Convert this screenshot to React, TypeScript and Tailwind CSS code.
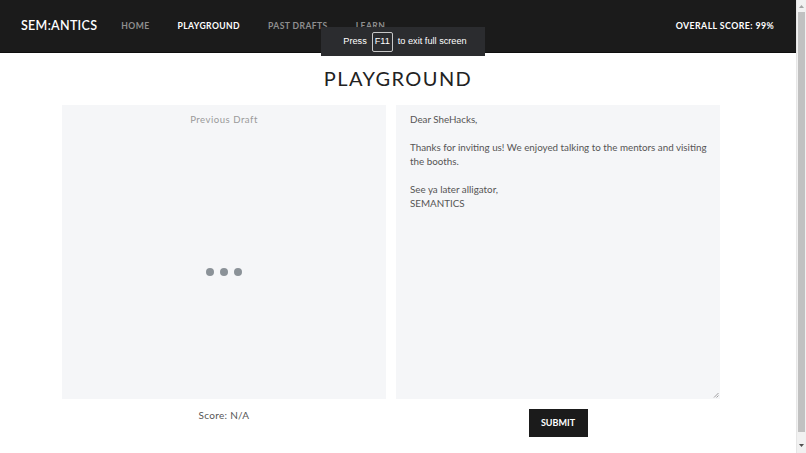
import React from "react";

export default function App() {
  return (
    <div className="w-[806px] h-[453px] overflow-hidden flex bg-white relative" style={{ fontFamily: "Lato, 'Noto Sans', sans-serif" }}>
      <div className="flex-1 flex flex-col">
        <nav className="h-[53px] bg-[#1b1b1b] flex items-center pl-[21px] pr-[22px] border-b border-[#0e0e0e]">
          <div className="text-white text-[12.5px] font-semibold tracking-[0.3px]">SEM:ANTICS</div>
          <div className="flex items-center ml-[24px] gap-[28px] text-[8.6px] font-bold tracking-[0.4px]">
            <span className="text-[#8e8e8e]">HOME</span>
            <span className="text-white">PLAYGROUND</span>
            <span className="text-[#8e8e8e]">PAST DRAFTS</span>
            <span className="text-[#8e8e8e]">LEARN</span>
          </div>
          <div className="ml-auto text-white text-[8.8px] font-bold tracking-[0.4px]">OVERALL SCORE: 99%</div>
        </nav>
        <h1 className="text-center text-[20px] tracking-[1.4px] text-[#222] mt-[11px] leading-[28px]">PLAYGROUND</h1>
        <div className="flex justify-center gap-[10px] mt-[13px] pr-[14px]">
          <div className="flex flex-col items-center w-[324px]">
            <div className="w-full h-[294px] bg-[#f5f6f8] flex flex-col items-center">
              <div className="mt-[8px] text-[9.6px] tracking-[0.5px] text-[#9a9a9a]">Previous Draft</div>
              <div className="flex items-center justify-center gap-[6px] mt-[141px]">
                <span className="w-[8px] h-[8px] rounded-full bg-[#8b9298]" />
                <span className="w-[8px] h-[8px] rounded-full bg-[#8b9298]" />
                <span className="w-[8px] h-[8px] rounded-full bg-[#8b9298]" />
              </div>
            </div>
            <div className="mt-[9px] text-[10px] tracking-[0.3px] text-[#555]">Score: N/A</div>
          </div>
          <div className="flex flex-col items-center w-[324px]">
            <div className="w-full h-[294px] bg-[#f5f6f8] pl-[14px] pr-[10px] pt-[7px] text-[9.8px] leading-[14px] text-[#555] relative">
              <p>Dear SheHacks,</p>
              <p className="mt-[14px]">Thanks for inviting us! We enjoyed talking to the mentors and visiting the booths.</p>
              <p className="mt-[14px]">See ya later alligator,</p>
              <p>SEMANTICS</p>
              <svg className="absolute right-[1px] bottom-[1px]" width="6" height="6" viewBox="0 0 6 6">
                <path d="M1 5.5 L5.5 1 M3.5 5.5 L5.5 3.5" stroke="#888" strokeWidth="0.8" />
              </svg>
            </div>
            <button className="mt-[10px] w-[59px] h-[28px] bg-[#1b1b1b] text-white text-[9px] font-bold">SUBMIT</button>
          </div>
        </div>
      </div>
      <div className="w-[10px] bg-[#f1f1f1] flex flex-col items-center border-l border-[#e6e6e6]">
        <div className="h-[12px] flex items-center justify-center">
          <svg width="5" height="3" viewBox="0 0 5 3"><path d="M0 3 L2.5 0 L5 3 Z" fill="#a3a3a3" /></svg>
        </div>
        <div className="w-[7px] h-[420px] bg-[#c1c1c1]" />
        <div className="flex-1 flex items-end pb-[6px]">
          <svg width="5" height="3" viewBox="0 0 5 3"><path d="M0 0 L5 0 L2.5 3 Z" fill="#505050" /></svg>
        </div>
      </div>
      <div className="absolute left-[321px] top-[27px] w-[164px] h-[29px] bg-[#2b2c2f] flex items-center justify-center gap-[5px] pl-[4px] text-[9.2px] text-white" style={{ fontFamily: "'Liberation Sans', 'Noto Sans', sans-serif" }}>
        <span>Press</span>
        <span className="border border-[#c8c8c8] rounded-[2px] w-[21px] h-[20px] flex items-center justify-center">F11</span>
        <span>to exit full screen</span>
      </div>
    </div>
  );
}
